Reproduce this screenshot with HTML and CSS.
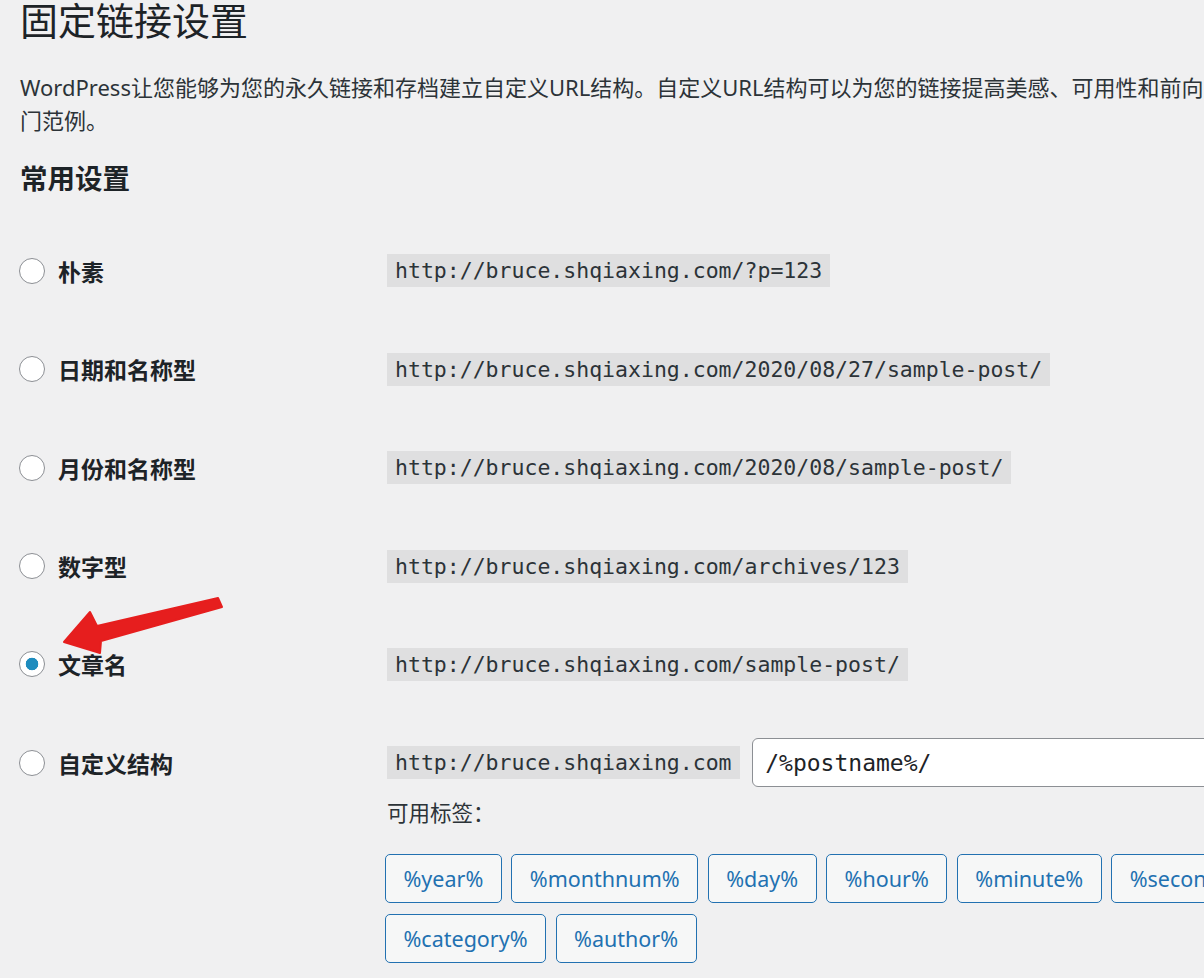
FILE: index.html
```html
<!DOCTYPE html>
<html lang="zh-CN">
<head>
    <meta charset="UTF-8" />
    <meta name="viewport" content="width=device-width, initial-scale=1.0" />
    <title>固定链接设置</title>
    <link rel="stylesheet" href="styles.css">
</head>
<body>

<div class="wrap">
    <h1>固定链接设置</h1>

    <p class="intro">WordPress让您能够为您的永久链接和存档建立自定义URL结构。自定义URL结构可以为您的链接提高美感、可用性和前向兼容性。这里有一些可供您参考的热<br>门范例。</p>

    <h2>常用设置</h2>

    <!-- Permalink options -->
    <div class="options">
        <div class="option">
            <label class="option-label"><input type="radio" name="permalink">朴素</label>
            <div class="option-value">
                <div class="url-line"><code>http://bruce.shqiaxing.com/?p=123</code></div>
            </div>
        </div>

        <div class="option">
            <label class="option-label"><input type="radio" name="permalink">日期和名称型</label>
            <div class="option-value">
                <div class="url-line"><code>http://bruce.shqiaxing.com/2020/08/27/sample-post/</code></div>
            </div>
        </div>

        <div class="option">
            <label class="option-label"><input type="radio" name="permalink">月份和名称型</label>
            <div class="option-value">
                <div class="url-line"><code>http://bruce.shqiaxing.com/2020/08/sample-post/</code></div>
            </div>
        </div>

        <div class="option">
            <label class="option-label"><input type="radio" name="permalink">数字型</label>
            <div class="option-value">
                <div class="url-line"><code>http://bruce.shqiaxing.com/archives/123</code></div>
            </div>
        </div>

        <div class="option">
            <label class="option-label"><input type="radio" name="permalink" checked>文章名</label>
            <div class="option-value">
                <div class="url-line"><code>http://bruce.shqiaxing.com/sample-post/</code></div>
            </div>
        </div>

        <div class="option">
            <label class="option-label"><input type="radio" name="permalink">自定义结构</label>
            <div class="option-value">
                <div class="url-line">
                    <code>http://bruce.shqiaxing.com</code>
                    <input type="text" class="custom-input" value="/%postname%/">
                </div>
                <p class="tags-title">可用标签：</p>
                <div class="tags">
                    <button class="tag">%year%</button>
                    <button class="tag">%monthnum%</button>
                    <button class="tag">%day%</button>
                    <button class="tag">%hour%</button>
                    <button class="tag">%minute%</button>
                    <button class="tag">%second%</button>
                    <button class="tag">%post_id%</button>
                    <button class="tag">%postname%</button>
                    <button class="tag">%category%</button>
                    <button class="tag">%author%</button>
                </div>
            </div>
        </div>
    </div>

    <!-- red pointer arrow -->
    <svg class="arrow" width="240" height="670" viewBox="0 0 240 670">
        <polygon points="64,642 90,612 97,626 218,598 222,607 101,641 100,653" fill="#e61e1e" stroke="#e61e1e" stroke-width="2" stroke-linejoin="round"/>
    </svg>
</div>

</body>
</html>
```

FILE: styles.css
```css
/* Basic Styles */
html, body {
    overflow: hidden;
}

body {
    margin: 0;
    padding: 0;
    background-color: #f0f0f1;
    color: #1d2327;
    font-family: "Noto Sans", "Noto Sans CJK SC", sans-serif;
}

.wrap {
    position: relative;
    width: 1700px;
    padding-left: 20px;
}

h1 {
    font-size: 38px;
    font-weight: 400;
    line-height: 40px;
    margin: 0;
}

.intro {
    font-size: 22px;
    line-height: 33px;
    margin: 30.5px 0 0;
    color: #2c3338;
}

h2 {
    font-size: 27.5px;
    font-weight: 600;
    line-height: 34px;
    margin: 25.5px 0 0;
}

/* Options */
.options {
    margin-top: 25.8px;
}

.option {
    display: flex;
    padding: 24.7px 0;
}

.option-label {
    width: 367px;
    height: 49px;
    flex-shrink: 0;
    display: flex;
    align-items: center;
    font-size: 23px;
    font-weight: 600;
}

.option-label input[type="radio"] {
    appearance: none;
    -webkit-appearance: none;
    width: 26px;
    height: 26px;
    margin: 0 13px 0 -1px;
    border: 1.6px solid #8c8f94;
    border-radius: 50%;
    background: #fff;
    box-sizing: border-box;
}

.option-label input[type="radio"]:checked {
    background: radial-gradient(circle, #1e8cbe 0 6px, #fff 6.6px);
}

.option-value {
    display: flex;
    flex-direction: column;
}

.url-line {
    height: 49px;
    display: flex;
    align-items: center;
    gap: 12.7px;
}

code {
    font-family: "DejaVu Sans Mono", monospace;
    font-size: 21.5px;
    line-height: 33px;
    padding: 0 8px;
    background-color: rgba(0, 0, 0, 0.07);
    color: #2c3338;
    white-space: nowrap;
}

.custom-input {
    width: 700px;
    height: 49px;
    box-sizing: border-box;
    border: 1.6px solid #8c8f94;
    border-radius: 6px;
    padding: 0 12px;
    background: #fff;
    color: #1d2327;
    font-family: "DejaVu Sans Mono", monospace;
    font-size: 23px;
}

.tags-title {
    font-size: 21.5px;
    line-height: 26px;
    margin: 12.5px 0 0;
    color: #2c3338;
}

.tags {
    display: flex;
    flex-wrap: wrap;
    gap: 11px 9.5px;
    width: 1230px;
    margin: 28px 0 0 -2px;
}

.tag {
    height: 49px;
    padding: 0 17.5px;
    border: 1.6px solid #2271b1;
    border-radius: 5px;
    background-color: #f6f7f7;
    color: #2271b1;
    font-family: "Noto Sans", sans-serif;
    font-size: 21.5px;
}

.arrow {
    position: absolute;
    left: 0;
    top: 0;
    pointer-events: none;
}
```
